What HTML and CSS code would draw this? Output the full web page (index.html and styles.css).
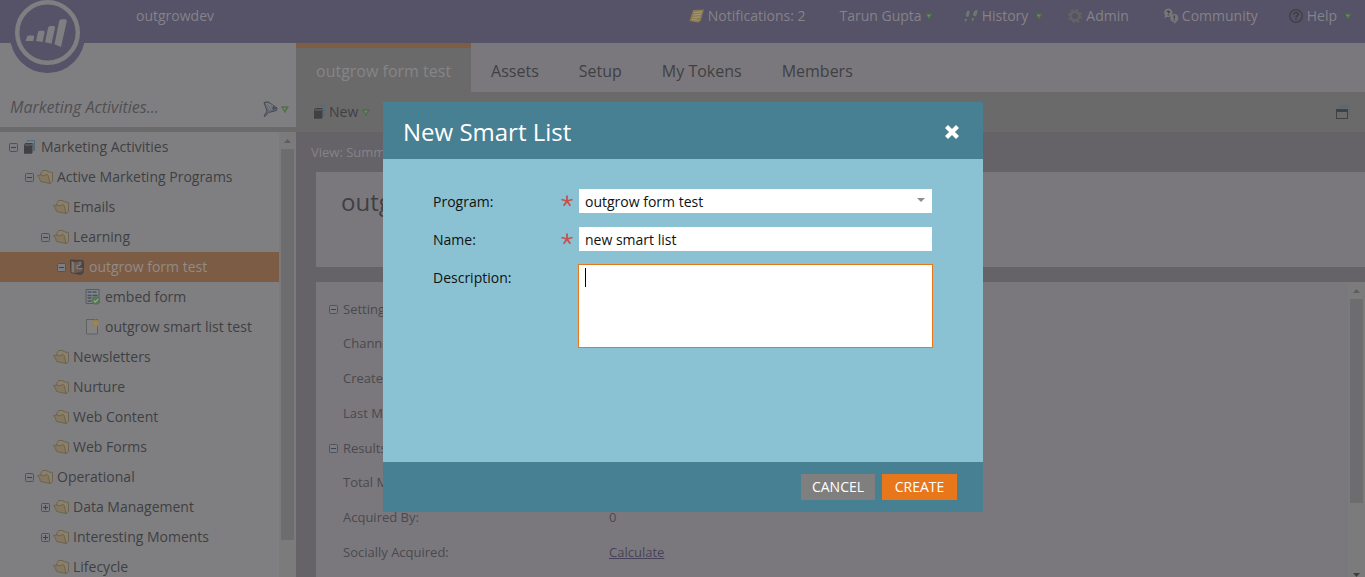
FILE: index.html
```
<!DOCTYPE html>
<html lang="en">
<head>
<meta charset="utf-8">
<title>Marketing Activities</title>
<link rel="stylesheet" href="styles.css">
</head>
<body>
<svg class="defs" aria-hidden="true">
  <symbol id="minus" viewBox="0 0 9 9"><rect x=".5" y=".5" width="8" height="8" rx="1" fill="#7c7d82" stroke="#50535d"/><path d="M2 4.500h5" stroke="#3b4252"/></symbol>
  <symbol id="plus" viewBox="0 0 9 9"><rect x=".5" y=".5" width="8" height="8" rx="1" fill="#7c7d82" stroke="#50535d"/><path d="M2 4.500h5M4.500 2v5" stroke="#3b4252"/></symbol>
  <symbol id="folder" viewBox="0 0 16 16"><path d="M4 6.500V3.500L5.200 2.500 5.700 1.500H10L10.500 2.600 15.500 3.500V12.500L13 14.500z" fill="#8b806b" stroke="#675d4a" stroke-width=".8"/><path d="M.5 6.500 4.500 6 5.500 7 10 5.500 11.200 6.500 13 14.500 3.500 12.500 2.500 9z" fill="#857860" stroke="#675d4a" stroke-width=".8"/></symbol>
  <symbol id="stack" viewBox="0 0 11 14"><path d="M3.500 2V.5h7v10H9" fill="none" stroke="#526c7e"/><path d="M9 3h1.500v8H9z" fill="#526c7e"/><path d="M0 4.500 1.500 3H8.500v9.500l-1 1.200H0z" fill="#414143"/><path d="M.8 5h6.500L8 4" fill="none" stroke="#77777a" stroke-width=".8"/></symbol>
  <symbol id="program" viewBox="0 0 15 16"><path d="M1 1 13.500 1.500 14 6 13.500 14 11 15.500 1.500 13.500z" fill="#514844" stroke="#454041"/><path d="M2 2 5 3.500V14L2 13z" fill="#85766b"/><path d="M5 3.500 12 2v4H9v4h4v2l-7 2z" fill="#6c5c53"/><path d="M10.500 3v3.500H7.500v3H13" fill="none" stroke="#88868a" stroke-width=".9"/></symbol>
  <symbol id="form" viewBox="0 0 15 16"><path d="M.5.5h13v14H.5z" fill="#828587" stroke="#545b62"/><path d="M2 3h10" stroke="#4e637b" stroke-width="2" stroke-dasharray="4 1"/><path d="M2 6.500h4m1 0h5M2 9h4m-4 3h4" stroke="#4a5057" stroke-width="1.300"/><path d="M7 8.500h5" stroke="#657181"/><circle cx="10.500" cy="11.500" r="4.200" fill="#557854"/><path d="m8.300 11.500 1.600 1.700 2.900-3.300" fill="none" stroke="#9aa59a" stroke-width="1.200"/></symbol>
  <symbol id="list" viewBox="0 0 14 16"><path d="M.5.5h11v14.500H.5z" fill="#838384" stroke="#616163"/><circle cx="9.600" cy="4.200" r="3.400" fill="#94825d"/><circle cx="9.600" cy="4.200" r="1.400" fill="#a28a49"/><path d="M9.600.5v1m0 5.500v1.300M6 4.200h1m5 0h1.300" stroke="#94825d"/></symbol>
  <symbol id="drop" viewBox="0 0 8 7"><path d="M.7.8h6.600L4 6.500z" fill="#587850" stroke="#4c6447" stroke-width=".7"/><path d="M2.500 2h2L3.700 3.800z" fill="#7e9578"/></symbol>
  <symbol id="up" viewBox="0 0 7 4"><path d="M0 4 3.500 0 7 4z" fill="#5e5e60"/></symbol>
  <symbol id="star" viewBox="0 0 12 12"><path d="M6 6V.5M6 6 .5 4.500M6 6l5.500-1.500M6 6l-3.300 4.800M6 6l3.300 4.800" stroke="#c4504f" stroke-width="1.800"/></symbol>
</svg>

<div class="app">
  <header class="topbar">
    <a class="logo" href="#" aria-label="Home">
      <svg viewBox="0 0 76 76"><circle cx="37.500" cy="35.500" r="37.500" fill="#565267"/><circle cx="37.500" cy="32.500" r="30.300" fill="none" stroke="#7f7f82" stroke-width="4.400"/><path d="M15.500 41 17 36.600Q17.500 35.500 19 35.500H23Q24.500 35.500 24.100 37L23.200 41zM26 41 28.100 32Q28.500 30.800 30 30.800H33.500Q35 30.800 34.700 32.300L32.500 42zM35 42.200 38 28Q38.500 26 40.500 26H43.500Q45.500 26 45 28L41.500 43.800zM44.500 44.300 49.200 21Q49.500 19.200 51.500 19.200H55Q57.200 19.200 56.700 21.500L51 47z" fill="#7f7f82"/></svg>
    </a>
    <span class="account">outgrowdev</span>
    <nav class="topnav">
      <a class="spaced" href="#"><svg class="i16" viewBox="0 0 16 16"><path d="M4 2 15 1.500 12 12 9 14.500.5 13z" fill="#8b7950"/><path d="M5 4.500 13 3.800M4.300 7 12 6.300M3.600 9.500l7.600-.6M3 11.700l6 .3" stroke="#a29a7e" stroke-width="1.200"/><path d="M12 12H9.500L9 14.500z" fill="#a08741"/></svg>Notifications: 2</a>
      <a href="#">Tarun Gupta<svg class="drop"><use href="#drop"/></svg></a>
      <a class="tight" href="#"><svg class="i16" viewBox="0 0 16 16"><g fill="#6f7577" stroke="#4b5154" stroke-width=".7"><path d="M2.500 8.800C2 5.500 3.500 2 5.600 2 8 2.200 7.300 6.500 5.200 9.500z"/><path d="M2 10 4.600 10.800C4 13.500 2.800 14.500 1.800 14 .8 13.500 1.200 11.500 2 10z"/><path d="M9.500 8C9.500 4.500 11.500 1.200 13.600 1.500 16 2 15 6 12.500 9z"/><path d="M9 9.300 11.800 10.200C11 13 9.800 14 8.800 13.500 7.800 13 8.200 10.800 9 9.300z"/></g></svg>History<svg class="drop drop-far"><use href="#drop"/></svg></a>
      <a class="spaced" href="#"><svg class="i16" viewBox="0 0 16 16"><circle cx="8" cy="8" r="4.300" fill="none" stroke="#636364" stroke-width="2.400"/><circle cx="8" cy="8" r="6.200" fill="none" stroke="#636364" stroke-width="1.800" stroke-dasharray="2.600 2.270"/></svg>Admin</a>
      <a href="#"><svg class="i16" viewBox="0 0 16 16"><circle cx="5.300" cy="4.700" r="4.200" fill="#77777a"/><path d="M2 7 1.500 10 5 8.500zM11 12v4l3-3z" fill="#77777a"/><circle cx="11.300" cy="10" r="4" fill="#77777a"/><path d="M4 3.800q1.300-1.500 2.400 0 .3.700-1 1.500M5.300 6.500v1M11.300 7.500v3m0 1v1" fill="none" stroke="#3f3d49" stroke-width="1.300"/></svg>Community</a>
      <a href="#"><svg class="i16" viewBox="0 0 16 16"><circle cx="8" cy="8" r="6.300" fill="none" stroke="#3f3e43" stroke-width="1.200"/><path d="M5.800 6.500Q5.900 4.500 8 4.500t2.200 1.800Q10.200 7.300 9 8 8 8.600 8 9.500M8 10.700v1.400" fill="none" stroke="#3f3e43" stroke-width="1.600"/></svg>Help<svg class="drop drop-far"><use href="#drop"/></svg></a>
    </nav>
  </header>

  <div class="columns">
    <aside class="sidebar">
      <div class="search">
        <input class="search-input" type="text" aria-label="Search" placeholder="Marketing Activities...">
        <button class="icon-btn" aria-label="Filter"><svg class="i16" viewBox="0 0 16 16"><path d="M1 1.500 5 .8 14 7 13.500 9.500 5.500 11.500 2 15.500 1 15l3-5z" fill="#666970" stroke="#484b54"/><path d="M3 2 7 9.500M5.500 2.500 9 8.500 13 8M4.500 2.500 10 5" fill="none" stroke="#84868d" stroke-width=".9"/><path d="M10 5.500 13.500 7.500 9.500 9.500z" fill="#484b54"/></svg><svg class="drop"><use href="#drop"/></svg></button>
      </div>
      <div class="tree-wrap">
        <ul class="tree">
          <li class="node l0"><button class="toggle" aria-label="Collapse"><svg><use href="#minus"/></svg></button><svg class="node-icon"><use href="#stack" x="3" y="1" width="11" height="14"/></svg>Marketing Activities</li>
          <li class="node l1"><button class="toggle" aria-label="Collapse"><svg><use href="#minus"/></svg></button><svg class="node-icon"><use href="#folder"/></svg>Active Marketing Programs</li>
          <li class="node l2"><span class="toggle"></span><svg class="node-icon"><use href="#folder"/></svg>Emails</li>
          <li class="node l2"><button class="toggle" aria-label="Collapse"><svg><use href="#minus"/></svg></button><svg class="node-icon"><use href="#folder"/></svg>Learning</li>
          <li class="node l3 selected"><button class="toggle" aria-label="Collapse"><svg><use href="#minus"/></svg></button><svg class="node-icon"><use href="#program"/></svg>outgrow form test</li>
          <li class="node l4"><span class="toggle"></span><svg class="node-icon"><use href="#form"/></svg>embed form</li>
          <li class="node l4"><span class="toggle"></span><svg class="node-icon"><use href="#list"/></svg>outgrow smart list test</li>
          <li class="node l2"><span class="toggle"></span><svg class="node-icon"><use href="#folder"/></svg>Newsletters</li>
          <li class="node l2"><span class="toggle"></span><svg class="node-icon"><use href="#folder"/></svg>Nurture</li>
          <li class="node l2"><span class="toggle"></span><svg class="node-icon"><use href="#folder"/></svg>Web Content</li>
          <li class="node l2"><span class="toggle"></span><svg class="node-icon"><use href="#folder"/></svg>Web Forms</li>
          <li class="node l1"><button class="toggle" aria-label="Collapse"><svg><use href="#minus"/></svg></button><svg class="node-icon"><use href="#folder"/></svg>Operational</li>
          <li class="node l2"><button class="toggle" aria-label="Expand"><svg><use href="#plus"/></svg></button><svg class="node-icon"><use href="#folder"/></svg>Data Management</li>
          <li class="node l2"><button class="toggle" aria-label="Expand"><svg><use href="#plus"/></svg></button><svg class="node-icon"><use href="#folder"/></svg>Interesting Moments</li>
          <li class="node l2"><span class="toggle"></span><svg class="node-icon"><use href="#folder"/></svg>Lifecycle</li>
        </ul>
        <div class="scrollbar"><svg class="scroll-arrow"><use href="#up"/></svg><div class="thumb thumb-tree"></div></div>
      </div>
    </aside>

    <main class="main">
      <nav class="tabs">
        <a class="tab active" href="#">outgrow form test</a>
        <a class="tab" href="#">Assets</a>
        <a class="tab" href="#">Setup</a>
        <a class="tab" href="#">My Tokens</a>
        <a class="tab" href="#">Members</a>
      </nav>
      <div class="toolbar">
        <button class="new-btn"><svg class="stack-icon"><use href="#stack"/></svg>New<svg class="drop"><use href="#drop"/></svg></button>
        <button class="icon-btn" aria-label="Open in new window"><svg class="i14" viewBox="0 0 14 14"><path d="M2 0h12v10h-1V3H2z" fill="#526c7e"/><path d="M0 4h12v10H0zM1 7v6h10V7z" fill="#414143" fill-rule="evenodd"/></svg></button>
      </div>
      <div class="view-bar">View: Summary</div>
      <section class="panel title-panel"><h1 class="page-title">outgrow form test</h1></section>
      <section class="panel details">
        <div class="detail-rows">
          <div class="group"><button class="toggle" aria-label="Collapse"><svg><use href="#minus"/></svg></button>Settings</div>
          <div class="row"><span>Channel:</span></div>
          <div class="row"><span>Created:</span></div>
          <div class="row"><span>Last Modified:</span></div>
          <div class="group"><button class="toggle" aria-label="Collapse"><svg><use href="#minus"/></svg></button>Results</div>
          <div class="row"><span>Total Members:</span></div>
          <div class="row"><span>Acquired By:</span><span>0</span></div>
          <div class="row"><span>Socially Acquired:</span><a href="#">Calculate</a></div>
        </div>
        <div class="scrollbar"><svg class="scroll-arrow"><use href="#up"/></svg><div class="thumb thumb-details"></div><svg class="scroll-arrow scroll-down" viewBox="0 0 7 4"><path d="M0 0h7L3.500 4z" fill="#3f3f42"/></svg></div>
      </section>
    </main>
  </div>
</div>

<div class="overlay">
  <form class="dialog" role="dialog" aria-labelledby="dialog-title">
    <div class="dialog-head">
      <h2 class="dialog-title" id="dialog-title">New Smart List</h2>
      <button class="icon-btn" type="button" aria-label="Close"><svg class="i14" viewBox="0 0 14 14"><path d="M3 3 11 11M11 3 3 11" stroke="#fff" stroke-width="4.200" stroke-linecap="square"/></svg></button>
    </div>
    <div class="dialog-body">
      <div class="field">
        <label for="program-field">Program:</label>
        <svg class="required"><use href="#star"/></svg>
        <div class="select-wrap">
          <select class="control" id="program-field"><option>outgrow form test</option></select>
          <svg class="select-arrow" viewBox="0 0 8 4"><path d="M0 0h8L4 4z" fill="#8e8e8e"/></svg>
        </div>
      </div>
      <div class="field">
        <label for="name-field">Name:</label>
        <svg class="required"><use href="#star"/></svg>
        <input class="control" id="name-field" type="text" value="new smart list">
      </div>
      <div class="field field-area">
        <label for="desc-field">Description:</label>
        <div class="area-wrap"><textarea class="area" id="desc-field"></textarea><span class="caret"></span></div>
      </div>
    </div>
    <div class="dialog-foot">
      <button class="btn cancel" type="button">CANCEL</button>
      <button class="btn create" type="submit">CREATE</button>
    </div>
  </form>
</div>
</body>
</html>
```

FILE: styles.css
```
* { box-sizing: border-box; }
body {
  margin: 0;
  font: 14px/20px "Open Sans", sans-serif;
  color: #404043;
  background: #656268;
  overflow: hidden;
}
a { color: inherit; text-decoration: none; }
button, input, select, textarea { font: inherit; color: inherit; border: 0; padding: 0; background: none; }
svg { display: block; flex: none; }
.defs { position: absolute; width: 0; height: 0; }
.i16 { width: 16px; height: 16px; }
.i14 { width: 14px; height: 14px; }
.drop { width: 8px; height: 7px; }
.drop-far { margin-left: 4px; }
.icon-btn { display: flex; align-items: center; gap: 2px; }

.app { display: flex; flex-direction: column; height: 100vh; }

.topbar { display: flex; flex: none; height: 43px; padding: 0 13px 0 10px; background: #565267; color: #848389; }
.logo { position: relative; z-index: 1; width: 76px; height: 76px; }
.logo svg { width: 76px; height: 76px; }
.account { margin-left: 50px; padding-top: 6px; }
.topnav { display: flex; gap: 30px; margin-left: auto; height: 32px; align-items: center; }
.topnav a { display: flex; align-items: center; gap: 3px; white-space: nowrap; }
.topnav .spaced { padding-right: 4px; }
.topnav .tight { margin-right: -6px; }

.columns { display: flex; flex: 1; min-height: 0; }
.sidebar { display: flex; flex-direction: column; flex: none; width: 296px; background: #7f7f81; }
.search { display: flex; align-items: flex-end; gap: 8px; height: 89px; padding: 0 7px 10px 10px; border-bottom: 5px solid #6a6a6b; }
.search-input { flex: 1; min-width: 0; height: 20px; font-size: 16px; font-style: italic; }
.search-input::placeholder { color: #505053; opacity: 1; }
.tree-wrap { display: flex; flex: 1; min-height: 0; overflow: hidden; }
.tree { flex: 1; margin: 0; padding: 0; list-style: none; }
.node { display: flex; align-items: center; height: 30px; white-space: nowrap; }
.l0 { padding-left: 9px; }
.l1 { padding-left: 25px; }
.l2 { padding-left: 41px; }
.l3 { padding-left: 57px; }
.l4 { padding-left: 73px; }
.selected { background: #7d5c45; color: #918b88; }
.toggle { flex: none; width: 12px; }
.toggle svg { width: 9px; height: 9px; }
.node-icon { width: 16px; height: 16px; margin-right: 4px; }

.scrollbar { display: flex; flex-direction: column; align-items: center; flex: none; width: 17px; padding-top: 7px; background: #7b7b7c; }
.scroll-arrow { width: 7px; height: 4px; }
.scroll-down { margin-top: auto; }
.thumb { width: 13px; margin-top: 6px; background: #6d6d6f; }
.thumb-tree { height: 391px; }
.thumb-details { height: 204px; }

.main { display: flex; flex-direction: column; flex: 1; min-width: 0; }
.tabs { display: flex; flex: none; height: 49px; background: #7a787d; font-size: 16px; }
.tab { padding: 18px 20px 0; }
.tab.active { padding-top: 13px; border-top: 5px solid #7f5c44; background: #6a6a6b; color: #858587; }
.toolbar { display: flex; flex: none; align-items: center; justify-content: space-between; height: 40px; padding: 0 15px 0 18px; background: #6a6a6b; }
.new-btn { display: flex; align-items: center; gap: 4px; }
.stack-icon { width: 11px; height: 14px; }
.view-bar { flex: none; height: 40px; padding: 10px 15px; font-size: 13px; color: #858388; }
.panel { margin-left: 20px; background: #7a787d; }
.title-panel { flex: none; height: 95px; margin-bottom: 15px; padding: 14px 25px; }
.page-title { margin: 0; font-size: 24px; line-height: 32px; font-weight: 400; }
.details { display: flex; flex: 1; min-height: 0; overflow: hidden; font-size: 13px; color: #4a494d; }
.detail-rows { flex: 1; padding: 10px 13px; }
.group { display: flex; align-items: center; height: 34px; gap: 2px; }
.row { display: grid; grid-template-columns: 266px 1fr; align-items: center; height: 35px; padding: 0 0 1px 14px; }
.row a { color: #464358; text-decoration: underline; }

.overlay { position: fixed; inset: 0; display: flex; justify-content: center; align-items: flex-start; padding: 102px 0 0 1px; }
.dialog { width: 600px; background: #8ac2d3; color: #111; }
.dialog-head { display: flex; align-items: center; justify-content: space-between; height: 57px; padding: 3px 24px 0 20px; background: #478092; color: #fff; }
.dialog-title { margin: 0; font-size: 24px; line-height: 32px; font-weight: 400; }
.dialog-body { display: flex; flex-direction: column; gap: 14px; height: 303px; padding: 30px 51px 30px 50px; }
.field { display: grid; grid-template-columns: 122px 12px 1fr; column-gap: 6px; align-items: center; }
.field label { padding-top: 2px; }
.field-area { grid-template-columns: 139px 1fr; align-items: start; margin: -1px -1px 0 0; }
.field-area label { padding-top: 4px; }
.required { width: 12px; height: 12px; }
.control { width: 100%; height: 24px; padding: 1px 6px 0; background: #fff; appearance: none; display: block; border-radius: 0; }
.select-wrap, .area-wrap { position: relative; }
.select-arrow { position: absolute; right: 7px; top: 9px; width: 8px; height: 4px; }
.area { display: block; width: 100%; height: 84px; padding: 2px 6px; border: 1px solid #e8761a; background: #fff; resize: none; }
.caret { position: absolute; left: 7px; top: 4px; width: 1px; height: 19px; background: #000; }
.dialog-foot { display: flex; justify-content: flex-end; align-items: center; gap: 7px; height: 50px; padding: 0 26px; background: #478092; }
.btn { height: 26px; color: #fff; }
.cancel { width: 74px; background: #7f7f7f; }
.create { width: 75px; background: #e8761a; }
```
